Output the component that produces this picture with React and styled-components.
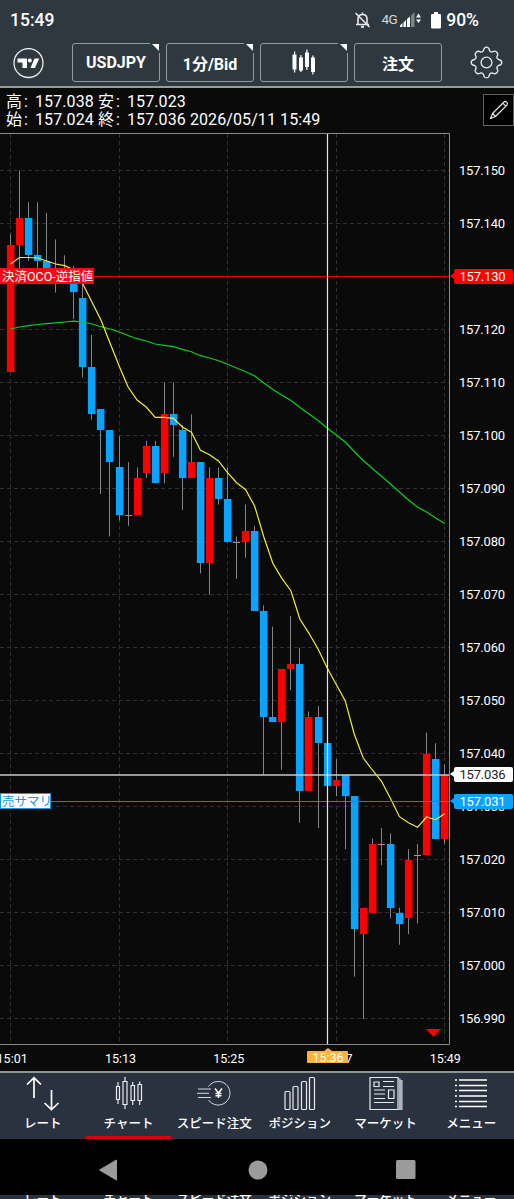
import React from "react";
import styled, { createGlobalStyle, css } from "styled-components";

const GlobalStyle = createGlobalStyle`
  * {
    box-sizing: border-box;
  }
  body {
    margin: 0;
    background: #000;
    color: #fff;
    font-family: Roboto, "Noto Sans CJK JP", sans-serif;
  }
`;

const Screen = styled.div`
  width: 514px;
  height: 1199px;
  overflow: hidden;
  display: flex;
  flex-direction: column;
  background: #0a0a0a;
`;

const Header = styled.header`
  height: 88px;
  flex: none;
  background: #2e383e;
  border-bottom: 2px solid #969b9b;
`;

const StatusBar = styled.div`
  height: 40px;
  padding: 0 35px 0 10px;
  display: flex;
  align-items: center;
  justify-content: space-between;
`;

const Clock = styled.span`
  font-size: 17.5px;
  font-weight: 500;
  line-height: 20px;
`;

const StatusIcons = styled.div`
  display: flex;
  align-items: center;
  svg {
    display: block;
  }
`;

const Network = styled.span`
  margin: -2px 3px 0 10px;
  font-size: 13.5px;
  letter-spacing: -0.5px;
  color: #d5d9da;
`;

const Battery = styled.span`
  margin-left: 5px;
  font-size: 17.5px;
  font-weight: 500;
`;

const Toolbar = styled.div`
  height: 46px;
  padding: 3px 11px 0 13px;
  display: flex;
  align-items: flex-start;
  .logo {
    margin: 5px 28px 0 0;
  }
  .gear {
    margin: 3px 0 0 auto;
  }
`;

const ToolButton = styled.button`
  position: relative;
  width: 88px;
  height: 39px;
  margin-right: 6px;
  padding: 0;
  display: flex;
  align-items: center;
  justify-content: center;
  border: 1px solid #929a9e;
  border-radius: 3px;
  background: none;
  color: #fff;
  font: 700 16px Roboto, "Noto Sans CJK JP", sans-serif;
  ${props =>
    props.$menu &&
    css`
      &::before {
        content: "";
        position: absolute;
        top: -1px;
        right: -1px;
        width: 10px;
        height: 10px;
        background: #2e383e;
      }
      &::after {
        content: "";
        position: absolute;
        top: 0;
        right: 0;
        border-top: 7px solid #fff;
        border-left: 7px solid transparent;
      }
    `}
`;

const Quote = styled.section`
  height: 45px;
  flex: none;
  padding: 5px 0 0 6px;
  display: flex;
  justify-content: space-between;
  align-items: flex-start;
`;

const QuoteText = styled.div`
  font-size: 16px;
  line-height: 18px;
  letter-spacing: 0.1px;
  white-space: pre;
`;

const QuoteLabel = styled.span`
  display: inline-block;
  width: 29px;
  letter-spacing: 2px;
`;

const EditButton = styled.button`
  width: 31px;
  height: 32px;
  margin-top: 1px;
  padding: 0;
  display: flex;
  align-items: center;
  justify-content: center;
  border: 1px solid #626262;
  background: #000;
`;

const Chart = styled.main`
  position: relative;
  height: 938px;
  flex: none;
  display: grid;
  grid-template-columns: 450px 1fr;
  grid-template-rows: 912px 26px;
  svg {
    display: block;
  }
`;

const PriceAxis = styled.div`
  padding-top: 11px;
  display: flex;
  flex-direction: column;
`;

const Price = styled.span`
  height: 53.03px;
  flex: none;
  padding-left: 9px;
  font-size: 13px;
  line-height: 53.03px;
  letter-spacing: -0.2px;
`;

const TimeAxis = styled.div`
  grid-column: 1 / 3;
  display: flex;
  margin-left: -42px;
`;

const Time = styled.span`
  width: 108.3px;
  flex: none;
  text-align: center;
  font-size: 12.5px;
  line-height: 27px;
`;

const PriceTag = styled.span`
  position: absolute;
  left: 454px;
  top: ${props => props.$top}px;
  width: 59px;
  height: 15px;
  padding-left: 5.5px;
  border-radius: 2px;
  background: ${props => props.$bg};
  color: ${props => props.$color || "#fff"};
  font-size: 13px;
  line-height: 16px;
  letter-spacing: -0.2px;
  &::before {
    content: "";
    position: absolute;
    left: -4px;
    top: 4px;
    border: 3.5px solid transparent;
    border-left: none;
    border-right: 4px solid ${props => props.$bg};
  }
`;

const OrderTag = styled.span`
  position: absolute;
  left: 0;
  top: ${props => props.$top}px;
  width: ${props => props.$width}px;
  height: 16px;
  padding-left: 1px;
  border: 1px solid ${props => props.$color};
  background: ${props => props.$bg};
  color: ${props => props.$text};
  font-size: 12.5px;
  line-height: 16px;
  white-space: nowrap;
`;

const TimeTag = styled.span`
  position: absolute;
  left: 307px;
  top: 918px;
  width: 41px;
  height: 12px;
  padding-left: 1px;
  border-radius: 1px;
  background: #ffb13b;
  text-align: center;
  font-size: 12.5px;
  line-height: 13px;
  &::before {
    content: "";
    position: absolute;
    left: 17px;
    top: -3px;
    border: 4px solid transparent;
    border-top: none;
    border-bottom: 3px solid #ffb13b;
  }
`;

const TabBar = styled.nav`
  height: 68px;
  flex: none;
  display: flex;
  border-top: 2px solid #8d9494;
  background: #2b323f;
`;

const Tab = styled.div`
  flex: 1;
  display: flex;
  flex-direction: column;
  align-items: center;
  border-bottom: 3px solid ${props => (props.$active ? "#d8000c" : "transparent")};
  svg {
    display: block;
    margin-top: 3px;
  }
`;

const TabLabel = styled.span`
  margin-top: 3px;
  font-size: 12.5px;
  font-weight: 500;
  line-height: 18px;
  white-space: nowrap;
`;

const NavBar = styled.div`
  height: 56px;
  flex: none;
  padding: 5px 98px 0;
  display: flex;
  align-items: center;
  justify-content: space-between;
  background: #000;
`;

const Strip = styled.div`
  height: 4px;
  flex: none;
  display: flex;
  overflow: hidden;
  background: #2b323f;
  ${TabLabel} {
    flex: 1;
    margin-top: -4px;
    text-align: center;
  }
`;

// [open, high, low, close] in 0.001 steps above 157.000
const candles = [
  [112, 138, 112, 136], [136, 150, 130, 141], [141, 144, 133, 134], [134, 144, 131, 133],
  [133, 142, 130, 131], [130, 137, 127, 131], [131, 134, 129, 130], [130, 132, 122, 127],
  [126, 129, 111, 113], [113, 119, 103, 104], [105, 105, 89, 101], [101, 101, 81, 95],
  [94, 100, 84, 85], [85, 95, 83, 85], [85, 94, 85, 92], [93, 99, 92, 98],
  [98, 99, 91, 91], [93, 110, 91, 104], [104, 110, 96, 102], [101, 102, 86, 92],
  [92, 104, 92, 95], [95, 95, 74, 76], [76, 94, 70, 92], [92, 94, 87, 88],
  [88, 94, 80, 80], [80, 81, 73, 80], [80, 87, 77, 82], [82, 83, 67, 67],
  [67, 68, 36, 47], [47, 64, 46, 46], [46, 56, 37, 56], [56, 66, 52, 57],
  [57, 60, 27, 33], [33, 48, 33, 47], [47, 49, 26, 42], [42, 44, 28, 34],
  [34, 39, 32, 35], [36, 36, 22, 32], [32, 32, -2, 7], [6, 11, -10, 11],
  [10, 24, 10, 23], [23, 26, 19, 23], [23, 25, 9, 11], [10, 11, 4, 8],
  [9, 22, 6, 20], [21, 23, 8, 21], [21, 44, 21, 40], [39, 42, 24, 24],
  [24, 38, 23, 36]
];

const shortAverage = [
  264, 257.5, 257.5, 258, 261, 264, 265.7, 270, 284, 302, 320, 343, 365.7, 387, 400, 407,
  417.3, 417.3, 418.3, 427, 432.3, 450.3, 454.7, 461, 472.7, 482.7, 489.7, 506.3, 536.7,
  563.3, 578.3, 590.7, 619.3, 633.3, 649, 667.7, 684.3, 700.7, 734, 758, 770, 781, 798.3,
  816.7, 822.7, 827.3, 817, 819.7, 813.7
];

const longAverage = [
  329, 327, 325.7, 324.5, 323.7, 322.8, 322, 321.2, 322, 324, 326.7, 329, 332, 335.5,
  338.7, 341, 344, 345.3, 346.7, 349.3, 351.7, 355.7, 358, 360.7, 364.3, 368, 371.7, 376,
  383, 389.5, 395, 400.5, 407.5, 414, 420.5, 428, 435, 442, 451.5, 460.5, 468.5, 476, 484,
  492, 500, 507, 512, 518, 523.5
];

const plotTop = 133;
const xAt = i => 10.5 + i * 9.045;
const yAt = value => 37.5 + (150 - value) * 5.303;
const toPoints = list => list.map((y, i) => `${xAt(i)},${y - plotTop}`).join(" ");

const prices = Array.from({ length: 17 }, (_, i) => (157.15 - i * 0.01).toFixed(3));

const Candle = ({ index, data }) => {
  const [open, high, low, close] = data;
  const x = Math.floor(xAt(index));
  const color = close > open ? "#ff0000" : "#08a4ff";
  const top = Math.round(yAt(Math.max(open, close)));
  const bottom = Math.round(yAt(Math.min(open, close)));
  return (
    <g>
      <rect x={x} y={yAt(high)} width="1" height={yAt(low) - yAt(high)} fill="#858585" />
      {open === close ? (
        <rect x={x - 3} y={top} width="7" height="1" fill="#959595" />
      ) : (
        <rect x={x - 3.1} y={top} width="7.5" height={bottom - top} fill={color} />
      )}
    </g>
  );
};

const Plot = () => (
  <svg width="450" height="912">
    <g stroke="#303030" strokeDasharray="4 3">
      {prices.map((price, i) => {
        const y = Math.floor(37.5 + i * 53.03) + 0.5;
        return <line key={price} x1="0" x2="449" y1={y} y2={y} />;
      })}
      {[10.5, 119.5, 227.5, 336.5, 444.5].map(x => (
        <line key={x} x1={x} x2={x} y1="1" y2="911" />
      ))}
    </g>
    {candles.map((data, i) => (
      <Candle key={i} index={i} data={data} />
    ))}
    <polyline points={toPoints(longAverage)} fill="none" stroke="#0bd01b" strokeWidth="1.2" />
    <polyline points={toPoints(shortAverage)} fill="none" stroke="#f0f032" strokeWidth="1.2" />
    <path d="M0 143.5H450" stroke="#d40b12" />
    <path d="M0 668.5H450" stroke="#1685c4" />
    <path d="M0 642H450" stroke="#c9c9c9" strokeWidth="1.6" />
    <path d="M327.5 0V911" stroke="#e6e6e6" strokeWidth="1.2" />
    <path d="M0 .5H449.5V911.5H0" fill="none" stroke="#8a8a8a" />
    <path d="M426 896h15l-7.5 8z" fill="#f00" />
  </svg>
);

const Logo = () => (
  <svg className="logo" width="31" height="31" viewBox="0 0 31 31">
    <circle cx="15.5" cy="15" r="14.5" fill="none" stroke="#e8eced" strokeWidth="1.3" />
    <path d="M4.500 10.500H14V20H9.500V14.500H4.500z" fill="#fff" />
    <circle cx="16.8" cy="12.5" r="2" fill="#fff" />
    <path d="M21.500 10.500H26.200L22 20H17.500z" fill="#fff" />
  </svg>
);

const Gear = () => (
  <svg className="gear" width="33" height="33" viewBox="0 0 33 33" fill="none" stroke="#e6eaeb" strokeWidth="1.3" strokeLinejoin="round">
    <path d="M13.5 4.5Q14 1.2 16.5 1.2T19.5 4.5L20.5 5.6L22.2 6.1Q24.8 4.2 26.8 6.2T26.8 10.8L27.3 12.5L28.5 13.5Q31.8 14 31.8 16.5T28.5 19.5L27.3 20.5L26.8 22.2Q28.8 24.8 26.8 26.8T22.2 26.8L20.5 27.3L19.5 28.5Q19 31.8 16.5 31.8T13.5 28.5L12.5 27.3L10.8 26.8Q8.2 28.8 6.2 26.8T6.2 22.2L5.7 20.5L4.5 19.5Q1.2 19 1.2 16.5T4.5 13.5L5.7 12.5L6.2 10.8Q4.2 8.2 6.2 6.2T10.8 6.2L12.5 5.6z" />
    <circle cx="16.5" cy="16.5" r="5.4" />
  </svg>
);

const CandleGlyph = () => (
  <svg width="26" height="27" viewBox="0 0 26 27" fill="#fff">
    <path d="M3 2.500h1.200v3h1.300v15H4.200v3H3v-3H1.500V5.500H3zM9.300 6h1.200v2.500H12v13h-1.500v1.500H9.300v-1.500H8v-13h1.300zM15.300 .5h1.200v3H18v14.500h-1.500v3h-1.200v-3H14V3.500h1.300zM21.300 6.500h1.200v2H24v14.500h-1.500v2.500h-1.200V23H20V8.500h1.300z" />
  </svg>
);

const BellOff = () => (
  <svg width="17" height="18" viewBox="0 0 17 18" fill="none" stroke="#e7eaeb" strokeWidth="1.6">
    <path d="M4 13.500V8Q4 3.500 8.500 3.500T13 8V13.500M2 13.500H15M8.500 1.500V4" />
    <path d="M7 15.800H10" strokeWidth="2" />
    <path d="M1.500 2L15.500 16" />
  </svg>
);

const Signal = () => (
  <svg width="22" height="16" viewBox="0 0 22 16" fill="#fff">
    <path d="M0 15V13.500L2.500 11V15zM3.500 15V10.500L6 8V15zM7 15V7L10 4.500V15z" />
    <path d="M11 15V3.500L14.500 0V15z" fill="#7d8588" />
    <path d="M16 5.500L18.500 1.500L21 5.500zM16 7.500h5L18.500 11z" />
  </svg>
);

const BatteryIcon = styled.svg`
  margin-left: 9px;
`;

const BatteryGlyph = () => (
  <BatteryIcon width="10" height="17" viewBox="0 0 10 17" fill="#fff">
    <path d="M3 0H7V2H9Q10 2 10 3V15.500Q10 16.500 9 16.500H1Q0 16.500 0 15.500V3Q0 2 1 2H3z" />
  </BatteryIcon>
);

const Pencil = () => (
  <svg width="20" height="20" viewBox="0 0 20 20" fill="none" stroke="#eee" strokeWidth="1.1" strokeLinejoin="round">
    <path d="M1.500 18.500L3.500 13.500L15 2Q16.200 .8 17.700 2.200T18 5L6.500 16.500zM3.500 13.500L6.500 16.500M13.800 3.200L16.800 6.200" />
  </svg>
);

const RateIcon = () => (
  <svg width="34" height="36" viewBox="0 0 34 36" fill="none" stroke="#fff" strokeWidth="1.7">
    <path d="M8 22V2M1 8.500L8 1.800L15 8.500M25.500 14V33M18.500 27L25.500 33.500L32.500 27" />
  </svg>
);

const ChartIcon = () => (
  <svg width="28" height="36" viewBox="0 0 28 36" fill="none" stroke="#e7eaf0" strokeWidth="1.2">
    <path d="M1.500 10.500h3v13h-3zM8 5.500h4v23H8zM16 9.500h3.500v15H16zM23 8.500h3.500v16H23zM3 6v4.500M3 23.500V28M10 1v4.500M10 28.500V33M17.700 6v3.500M17.700 24.500V29M24.700 5.500v3M24.700 24.500V29" />
  </svg>
);

const SpeedIcon = () => (
  <svg width="34" height="36" viewBox="0 0 34 36" fill="none" stroke="#d4d9e0" strokeWidth="1">
    <path d="M11.500 10.500A11.800 11.800 0 1 1 11.500 24M1 13H14M0 17.300H12M1 21.500H14" />
    <path d="M18 12.500L21.500 17L25 12.500M21.500 17V22M18.500 17.500H24.500M18.500 19.700H24.500" stroke="#fff" strokeWidth="1.5" />
  </svg>
);

const PositionIcon = () => (
  <svg width="32" height="36" viewBox="0 0 32 36" fill="none" stroke="#e7eaf0" strokeWidth="1.2">
    <rect x="1" y="15.5" width="5" height="18" rx="1" />
    <rect x="9" y="10.5" width="5" height="23" rx="1" />
    <rect x="17.5" y="5.5" width="5" height="28" rx="1" />
    <rect x="25.5" y="1.5" width="5" height="32" rx="1" />
  </svg>
);

const MarketIcon = () => (
  <svg width="34" height="36" viewBox="0 0 34 36" fill="none" stroke="#e7eaf0" strokeWidth="1.2">
    <path d="M1 1.500H29V33.500H1zM5 6h5v4.500H5zM19.500 14h5.500v8.500h-5.500z" />
    <path d="M14 5.500H25M14 10.500H25M5 14H16M5 18H16M5 22.500H16M5 26.500H25" />
    <path d="M29 3H31V33.500H29M31 4.500H33V33.500H31" fill="#9aa0ab" stroke="#b9bec6" />
  </svg>
);

const MenuIcon = () => (
  <svg width="34" height="36" viewBox="0 0 34 36" stroke="#fff" strokeWidth="1.5">
    {[4, 9.5, 14.5, 20, 25.5, 30.5].map(y => (
      <path key={y} d={`M1 ${y}h2M5 ${y}H33`} />
    ))}
  </svg>
);

const tabs = [
  { label: "レート", icon: <RateIcon /> },
  { label: "チャート", icon: <ChartIcon />, active: true },
  { label: "スピード注文", icon: <SpeedIcon /> },
  { label: "ポジション", icon: <PositionIcon /> },
  { label: "マーケット", icon: <MarketIcon /> },
  { label: "メニュー", icon: <MenuIcon /> }
];

const App = () => {
  return (
    <Screen>
      <GlobalStyle />
      <Header>
        <StatusBar>
          <Clock>15:49</Clock>
          <StatusIcons>
            <BellOff />
            <Network>4G</Network>
            <Signal />
            <BatteryGlyph />
            <Battery>90%</Battery>
          </StatusIcons>
        </StatusBar>
        <Toolbar>
          <Logo />
          <ToolButton $menu>USDJPY</ToolButton>
          <ToolButton $menu>1分/Bid</ToolButton>
          <ToolButton $menu>
            <CandleGlyph />
          </ToolButton>
          <ToolButton>注文</ToolButton>
          <Gear />
        </Toolbar>
      </Header>
      <Quote>
        <div>
          <QuoteText>
            <QuoteLabel>高:</QuoteLabel>157.038 <QuoteLabel>安:</QuoteLabel>157.023
          </QuoteText>
          <QuoteText>
            <QuoteLabel>始:</QuoteLabel>157.024 <QuoteLabel>終:</QuoteLabel>157.036 2026/05/11 15:49
          </QuoteText>
        </div>
        <EditButton>
          <Pencil />
        </EditButton>
      </Quote>
      <Chart>
        <Plot />
        <PriceAxis>
          {prices.map(price => (
            <Price key={price}>{price}</Price>
          ))}
        </PriceAxis>
        <TimeAxis>
          {["15:01", "15:13", "15:25", "15:37", "15:49"].map(time => (
            <Time key={time}>{time}</Time>
          ))}
        </TimeAxis>
        <OrderTag $top={135} $width={94} $bg="#f50a14" $color="#f50a14" $text="#fff">
          決済OCO-逆指値
        </OrderTag>
        <OrderTag $top={660} $width={51} $bg="#fff" $color="#2196dc" $text="#2196dc">
          売サマリ
        </OrderTag>
        <PriceTag $top={136} $bg="#ff0000">157.130</PriceTag>
        <PriceTag $top={634} $bg="#fff" $color="#222">157.036</PriceTag>
        <PriceTag $top={661} $bg="#08a4ff">157.031</PriceTag>
        <TimeTag>15:36</TimeTag>
      </Chart>
      <TabBar>
        {tabs.map(tab => (
          <Tab key={tab.label} $active={tab.active}>
            {tab.icon}
            <TabLabel>{tab.label}</TabLabel>
          </Tab>
        ))}
      </TabBar>
      <NavBar>
        <svg width="21" height="22" viewBox="0 0 21 22">
          <path d="M1.500 11L18.500 1V21z" fill="#9b9b9b" stroke="#9b9b9b" strokeLinejoin="round" />
        </svg>
        <svg width="20" height="20">
          <circle cx="10" cy="10" r="9.5" fill="#9b9b9b" />
        </svg>
        <svg width="20" height="20">
          <rect width="19.5" height="19" rx="1.5" fill="#9b9b9b" />
        </svg>
      </NavBar>
      <Strip>
        {tabs.map(tab => (
          <TabLabel key={tab.label}>{tab.label}</TabLabel>
        ))}
      </Strip>
    </Screen>
  );
};

export default App;
